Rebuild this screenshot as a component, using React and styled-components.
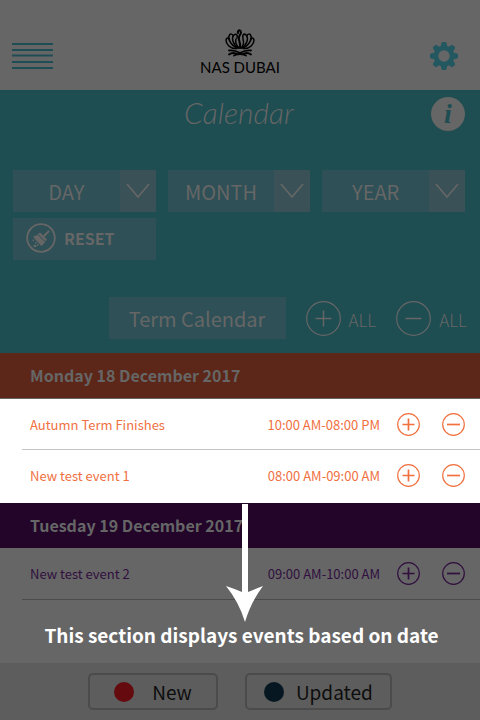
import React from "react";
import styled, { createGlobalStyle, css } from "styled-components";

const c = {
  grey: "#666666",
  teal: "#1e4d52",
  field: "#2e5056",
  fieldEnd: "#3a5257",
  orange: "#f0703f",
  orangeBand: "#5c2718",
  purple: "#300f3e",
  purpleBand: "#220529",
};

const GlobalStyle = createGlobalStyle`
  * { box-sizing: border-box; }
  body { margin: 0; background: ${c.grey}; }
  body, button, select { font-family: "Noto Sans CJK SC", "Noto Sans", sans-serif; }
  button { padding: 0; border: 0; background: none; color: inherit; cursor: pointer; }
  h1, h2, p, ul { margin: 0; padding: 0; }
  svg { display: block; }
`;

const Page = styled.div`
  display: flex;
  flex-direction: column;
  min-height: 100vh;
`;

const Header = styled.header`
  display: grid;
  grid-template-columns: 1fr auto 1fr;
  align-items: center;
  height: 90px;
  padding: 22px 12px 0;
`;

const MenuButton = styled.button`
  justify-self: start;
`;

const SettingsButton = styled.button`
  justify-self: end;
  margin-right: 10px;
`;

const Brand = styled.div`
  display: flex;
  flex-direction: column;
  align-items: center;
  padding-bottom: 6px;
  color: #000;
  font: 15px/20px Lato, sans-serif;
`;

const Panel = styled.section`
  height: 263px;
  padding: 7px 15px 0 13px;
  background: ${c.teal};
  color: ${c.grey};
`;

const TitleRow = styled.div`
  display: grid;
  grid-template-columns: 34px 1fr 34px;
  height: 73px;
`;

const Title = styled.h1`
  text-align: center;
  font: italic 300 30px/30px Lato, sans-serif;
`;

const Info = styled.button`
  && { background: ${c.grey}; }
  width: 34px;
  height: 34px;
  border-radius: 50%;
  color: ${c.teal};
  font: italic bold 28px/32px "Liberation Serif", serif;
`;

const Filters = styled.div`
  display: grid;
  grid-template-columns: repeat(3, 1fr);
  gap: 6px 12px;
`;

const Field = styled.label`
  display: grid;
  grid-template-columns: 1fr 36px;
  height: 42px;
  background: ${c.field};
`;

const Select = styled.select`
  grid-area: 1 / 1 / 2 / 3;
  min-width: 0;
  padding: 0 36px 0 0;
  border: 0;
  appearance: none;
  background: none;
  color: ${c.grey};
  font-size: 20px;
  text-align: center;
  text-align-last: center;
`;

const FieldEnd = styled.span`
  grid-area: 1 / 2;
  display: grid;
  place-items: center;
  background: ${c.fieldEnd};
  pointer-events: none;
`;

const Reset = styled.button`
  && { background: ${c.field}; padding: 0 0 2px 13px; }
  display: flex;
  align-items: center;
  gap: 8px;
  height: 42px;
  font-size: 16px;
  font-weight: 700;
`;

const TermRow = styled.div`
  display: flex;
  align-items: center;
  justify-content: flex-end;
  gap: 20px;
  margin: 37px -2px 0 0;
`;

const Term = styled.button`
  && { background: ${c.field}; }
  height: 42px;
  width: 177px;
  font-size: 20px;
`;

const AllButton = styled.button`
  display: flex;
  align-items: center;
  gap: 8px;
  font-size: 17px;
  font-weight: 300;
  line-height: 20px;
`;

const AllLabel = styled.span`
  padding-top: 4px;
`;

const Band = styled.h2`
  height: 45px;
  padding-left: 30px;
  background: ${(p) => p.$color};
  color: ${c.grey};
  font-size: 16px;
  font-weight: 700;
  line-height: 45px;
`;

const Event = styled.li`
  display: flex;
  align-items: center;
  height: 52px;
  margin-left: 22px;
  padding: 0 15px 0 8px;
  color: ${(p) => p.$color};
  border-bottom: 1px solid ${(p) => p.$line};
  font-size: 13px;
`;

const Events = styled.ul`
  list-style: none;
  ${(p) => p.$lit && css`
    padding-bottom: 2px;
    background: #fff;
    border-top: 1px solid ${c.grey};
    && { padding-bottom: 2px; }
    ${Event} { height: 51px; }
  `}
`;

const EventName = styled.span`
  flex: 1;
`;

const Actions = styled.span`
  display: flex;
  gap: 22px;
  margin-left: 17px;
`;

const Callout = styled.section`
  position: relative;
  flex: 1;
`;

const Arrow = styled.svg`
  position: absolute;
  top: 1px;
  left: calc(50% - 14px);
`;

const Caption = styled.p`
  && { padding: 21px 0 14px 3px; }
  color: #fff;
  font-size: 19px;
  font-weight: 700;
  line-height: 28px;
  text-align: center;
`;

const Footer = styled.footer`
  display: flex;
  align-items: center;
  justify-content: center;
  gap: 27px;
  height: 57px;
  background: #5d5d5d;
`;

const Legend = styled.button`
  display: flex;
  align-items: center;
  gap: ${(p) => p.$gap}px;
  height: 37px;
  && { padding: 0 ${(p) => p.$pad}px; border: 2px solid #4b4b4b; }
  border-radius: 5px;
  color: #0d0d0d;
  font-size: 19px;
  line-height: 30px;
`;

const Dot = styled.span`
  width: 20px;
  height: 20px;
  border-radius: 50%;
  background: ${(p) => p.$color};
`;

function MenuIcon() {
  return (
    <svg width="42" height="30" viewBox="0 0 42 30" stroke="#1e4d56" strokeWidth="2">
      <path d="M0 3h41M0 9h41M0 14.500h41M0 21h41M0 27h41" />
    </svg>
  );
}

function GearIcon() {
  return (
    <svg width="28" height="28" viewBox="-14 -14 28 28" fill="#245861">
      <circle r="8" fill="none" stroke="#245861" strokeWidth="4.600" />
      {[0, 45, 90, 135, 180, 225, 270, 315].map((a) => (
        <path key={a} transform={`rotate(${a})`} d="M-3.500 -9L-2.500 -13Q-2.300 -14 -1.300 -14H1.300Q2.300 -14 2.500 -13L3.500 -9Z" />
      ))}
    </svg>
  );
}

function Lotus() {
  return (
    <svg width="30" height="28" viewBox="0 0 30 28" fill="none" stroke="#000" strokeWidth="1.500" strokeLinecap="round">
      <path strokeWidth="2" d="M15 19C16 14 13 11 14 8C15 5 17 4 15.500 2C14 0.500 12.500 2 13 4" />
      <path d="M14 19C11 16 10 13 11 10M16 19C19 16 19 13 18 10" />
      <path d="M13.500 19C8 16 6 9 9 6C11 4 13 6 12 9M16.500 19C22 16 24 9 21 6C19 4 17 6 18 9" />
      <path d="M12.500 19C6 17 3 10 4 7C5 4 8 5 8 7M17.500 19C24 17 27 10 26 7C25 4 22 5 22 7" />
      <path d="M11.500 19.500C5 20 1 15 1 11C2 8 4 9 4.500 11M18.500 19.500C25 20 29 15 29 11C28 8 26 9 25.500 11" />
      <path strokeWidth="1.800" d="M4 21.500Q10 21 15 24Q20 21 26 21.500M4 25.500Q8 22.500 13 25.500M26 25.500Q22 22.500 17 25.500M9 26.500Q15 23.500 21 26.500" />
    </svg>
  );
}

function ChevronIcon() {
  return (
    <svg width="24" height="16" viewBox="0 0 24 16" fill="none" stroke={c.grey} strokeWidth="1.600">
      <path d="M1 1L12 14L23 1" />
    </svg>
  );
}

function BrushIcon() {
  return (
    <svg width="30" height="30" viewBox="0 0 30 30" fill={c.grey}>
      <circle cx="15" cy="15" r="13.800" fill="none" stroke={c.grey} strokeWidth="1.800" />
      <path d="M23 8L17.500 13.500" stroke={c.grey} strokeWidth="2" />
      <path d="M14 9.500L21 16.500L19.500 18.500L12 11ZM11.500 11.500L19.200 19.200L15.500 23L12 19.500L8 15Q7 13.500 8 13Q10 13 11.500 11.500Z" />
      <path d="M6.500 16.500h1.500v1.500h-1.500zM9 19h1.500v1.500h-1.500zM7.500 22h3v2h-3zM11 21h1.500v1.500h-1.500z" />
    </svg>
  );
}

function CircleSign({ size, plus, stroke, arm }) {
  const m = size / 2;
  return (
    <svg width={size} height={size} fill="none" stroke="currentColor" strokeWidth="1.200">
      <circle cx={m} cy={m} r={m - 0.7} />
      <path
        strokeWidth={stroke}
        d={`M${m - arm} ${m}h${arm * 2}${plus ? `M${m} ${m - arm}v${arm * 2}` : ""}`}
      />
    </svg>
  );
}

function Filter({ name }) {
  return (
    <Field>
      <Select aria-label={name}>
        <option>{name}</option>
      </Select>
      <FieldEnd><ChevronIcon /></FieldEnd>
    </Field>
  );
}

function EventRow({ name, time, color, line }) {
  return (
    <Event $color={color} $line={line}>
      <EventName>{name}</EventName>
      <time>{time}</time>
      <Actions>
        <button aria-label={`Add ${name}`}><CircleSign size={23} plus stroke={1.7} arm={6} /></button>
        <button aria-label={`Remove ${name}`}><CircleSign size={23} stroke={1.7} arm={6.5} /></button>
      </Actions>
    </Event>
  );
}

export default function App() {
  return (
    <Page>
      <GlobalStyle />
      <Header>
        <MenuButton aria-label="Menu"><MenuIcon /></MenuButton>
        <Brand><Lotus />NAS DUBAI</Brand>
        <SettingsButton aria-label="Settings"><GearIcon /></SettingsButton>
      </Header>
      <Panel>
        <TitleRow>
          <span />
          <Title>Calendar</Title>
          <Info aria-label="Information">i</Info>
        </TitleRow>
        <Filters>
          <Filter name="DAY" />
          <Filter name="MONTH" />
          <Filter name="YEAR" />
          <Reset><BrushIcon />RESET</Reset>
        </Filters>
        <TermRow>
          <Term>Term Calendar</Term>
          <AllButton><CircleSign size={35} plus stroke={1.5} arm={8} /><AllLabel>ALL</AllLabel></AllButton>
          <AllButton><CircleSign size={35} stroke={1.5} arm={8} /><AllLabel>ALL</AllLabel></AllButton>
        </TermRow>
      </Panel>
      <section>
        <Band $color={c.orangeBand}>Monday 18 December 2017</Band>
        <Events $lit>
          <EventRow name="Autumn Term Finishes" time="10:00 AM-08:00 PM" color={c.orange} line="#c4c4c4" />
          <EventRow name="New test event 1" time="08:00 AM-09:00 AM" color={c.orange} line="transparent" />
        </Events>
      </section>
      <Callout>
        <Band $color={c.purpleBand}>Tuesday 19 December 2017</Band>
        <Events>
          <EventRow name="New test event 2" time="09:00 AM-10:00 AM" color={c.purple} line="#4b4b4b" />
        </Events>
        <Arrow width="38" height="119" viewBox="0 0 38 119" fill="#fff">
          <path d="M16 0H22V88Q29 85 37 82Q25 98 19 118Q13 98 0 82Q9 85 16 88Z" />
        </Arrow>
        <Caption>This section displays events based on date</Caption>
      </Callout>
      <Footer>
        <Legend $gap={18} $pad={24}><Dot $color="#650a0e" />New</Legend>
        <Legend $gap={12} $pad={17}><Dot $color="#071722" />Updated</Legend>
      </Footer>
    </Page>
  );
}
